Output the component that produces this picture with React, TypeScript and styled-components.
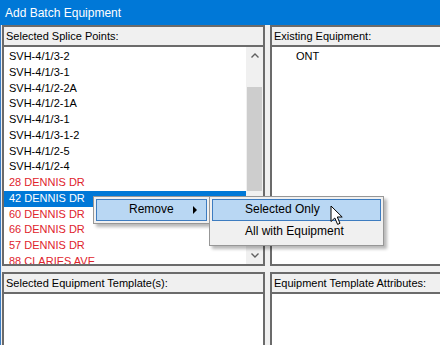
import React from "react";
import styled, { createGlobalStyle } from "styled-components";

const GlobalStyle = createGlobalStyle`
  html, body {
    margin: 0;
    padding: 0;
    background: #f0f0f0;
  }
  body {
    font-family: "Liberation Sans", Arial, sans-serif;
  }
`;

type Item = { label: string; red?: boolean; selected?: boolean };

const splicePoints: Item[] = [
  { label: "SVH-4/1/3-2" },
  { label: "SVH-4/1/3-1" },
  { label: "SVH-4/1/2-2A" },
  { label: "SVH-4/1/2-1A" },
  { label: "SVH-4/1/3-1" },
  { label: "SVH-4/1/3-1-2" },
  { label: "SVH-4/1/2-5" },
  { label: "SVH-4/1/2-4" },
  { label: "28 DENNIS DR", red: true },
  { label: "42 DENNIS DR", red: true, selected: true },
  { label: "60 DENNIS DR", red: true },
  { label: "66 DENNIS DR", red: true },
  { label: "57 DENNIS DR", red: true },
  { label: "88 CLARIES AVE", red: true },
];

const Window = styled.div`
  position: relative;
  width: 440px;
  height: 345px;
  overflow: hidden;
  display: flex;
  flex-direction: column;
  background: #f0f0f0;
`;

const TitleBar = styled.div`
  height: 25px;
  flex-shrink: 0;
  background: #0078d7;
  color: #fff;
  font-size: 12px;
  line-height: 26px;
  padding-left: 5px;
`;

const Body = styled.div`
  flex: 1;
  display: grid;
  grid-template-columns: 263px 176px;
  grid-template-rows: 241px 90px;
  column-gap: 5px;
  row-gap: 6px;
  border-left: 1px solid #3a7cc4;
  padding-left: 1px;
`;

const Panel = styled.div`
  box-sizing: border-box;
  display: flex;
  flex-direction: column;
  border: 2px solid #6b6b6b;
  background: #fff;
  overflow: hidden;
  min-height: 0;
`;

const Header = styled.div`
  height: 18px;
  flex-shrink: 0;
  background: #f0f0f0;
  border-bottom: 2px solid #6b6b6b;
  font-size: 11px;
  line-height: 19px;
  padding-left: 2px;
  color: #000;
  white-space: nowrap;
`;

const Content = styled.div`
  flex: 1;
  display: flex;
  min-height: 0;
`;

const List = styled.div`
  flex: 1;
  overflow: hidden;
  padding-top: 2px;
`;

const Row = styled.div<{ $red?: boolean; $selected?: boolean }>`
  height: 15.75px;
  line-height: 15.75px;
  font-size: 11px;
  padding-left: 5px;
  white-space: nowrap;
  color: ${(p) => (p.$selected ? "#fff" : p.$red ? "#e0232c" : "#000")};
  background: ${(p) => (p.$selected ? "#0078d7" : "transparent")};
`;

const IndentRow = styled(Row)`
  padding-left: 24px;
`;

const ScrollBar = styled.div`
  width: 17px;
  flex-shrink: 0;
  display: flex;
  flex-direction: column;
  background: #f0f0f0;
`;

const ScrollButton = styled.div`
  height: 17px;
  display: flex;
  align-items: center;
  justify-content: center;
`;

const Track = styled.div`
  flex: 1;
  display: flex;
  flex-direction: column;
  align-items: center;
`;

const Thumb = styled.div`
  width: 15px;
  height: 104px;
  margin-top: 23px;
  background: #cdcdcd;
`;

const Menu = styled.div<{ $left: number; $top: number; $width: number }>`
  position: absolute;
  left: ${(p) => p.$left}px;
  top: ${(p) => p.$top}px;
  width: ${(p) => p.$width}px;
  box-sizing: border-box;
  padding: 2px;
  background: #f0f0f0;
  border: 1px solid #979797;
  box-shadow: 3px 3px 3px rgba(0, 0, 0, 0.28);
  font-size: 12px;
  color: #000;
`;

const MenuItem = styled.div<{ $active?: boolean }>`
  position: relative;
  box-sizing: border-box;
  height: 22px;
  line-height: 19px;
  padding-left: 32px;
  white-space: nowrap;
  border: 1px solid ${(p) => (p.$active ? "#3d7cc0" : "transparent")};
  background: ${(p) => (p.$active ? "#b9d7f3" : "transparent")};
`;

const SubArrow = styled.span`
  position: absolute;
  right: 9px;
  top: 6px;
  width: 0;
  height: 0;
  border-top: 4px solid transparent;
  border-bottom: 4px solid transparent;
  border-left: 4px solid #000;
`;

const Cursor = styled.svg`
  position: absolute;
  left: 330px;
  top: 205px;
`;

const Chevron = ({ down }: { down?: boolean }) => (
  <svg width="8" height="5" viewBox="0 0 8 5">
    <polyline
      points={down ? "0.5,0.5 4,4 7.5,0.5" : "0.5,4.5 4,1 7.5,4.5"}
      fill="none"
      stroke="#606060"
      strokeWidth="1.4"
    />
  </svg>
);

export default function App() {
  return (
    <>
      <GlobalStyle />
      <Window>
        <TitleBar>Add Batch Equipment</TitleBar>
        <Body>
          <Panel>
            <Header>Selected Splice Points:</Header>
            <Content>
              <List>
                {splicePoints.map((it, i) => (
                  <Row key={i} $red={it.red} $selected={it.selected}>
                    {it.label}
                  </Row>
                ))}
              </List>
              <ScrollBar>
                <ScrollButton>
                  <Chevron />
                </ScrollButton>
                <Track>
                  <Thumb />
                </Track>
                <ScrollButton>
                  <Chevron down />
                </ScrollButton>
              </ScrollBar>
            </Content>
          </Panel>
          <Panel>
            <Header>Existing Equipment:</Header>
            <Content>
              <List>
                <IndentRow>ONT</IndentRow>
              </List>
            </Content>
          </Panel>
          <Panel>
            <Header>Selected Equipment Template(s):</Header>
            <Content />
          </Panel>
          <Panel>
            <Header>Equipment Template Attributes:</Header>
            <Content />
          </Panel>
        </Body>

        <Menu $left={93} $top={196} $width={117}>
          <MenuItem $active>
            Remove
            <SubArrow />
          </MenuItem>
        </Menu>
        <Menu $left={209} $top={196} $width={175}>
          <MenuItem $active>Selected Only</MenuItem>
          <MenuItem>All with Equipment</MenuItem>
        </Menu>

        <Cursor width="14" height="21" viewBox="0 0 14 21">
          <path
            d="M1 1 V16.5 L4.8 13 L7.6 19.4 L10 18.3 L7.3 12 H12.2 Z"
            fill="#fff"
            stroke="#000"
            strokeWidth="1"
            strokeLinejoin="miter"
          />
        </Cursor>
      </Window>
    </>
  );
}
